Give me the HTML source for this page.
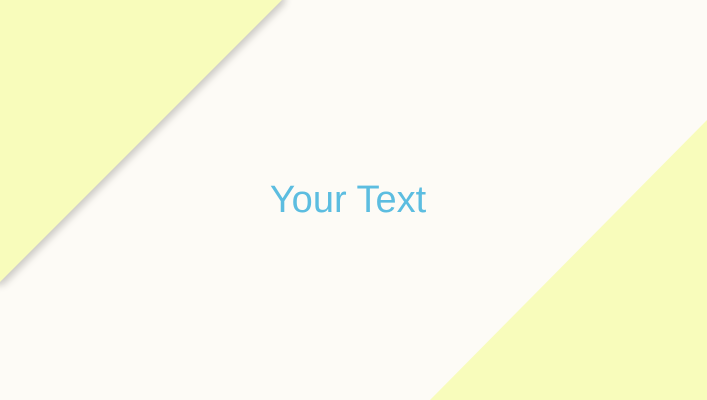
<!DOCTYPE html>
<html><head><style>
html,body{margin:0;padding:0;width:707px;height:400px;overflow:hidden;background:#f8fcbb}
</style></head><body>
<svg width="707" height="400" viewBox="0 0 707 400" style="position:absolute;left:0;top:0">
<defs><filter id="b" x="-20%" y="-20%" width="140%" height="140%"><feGaussianBlur stdDeviation="4"/></filter></defs>
<rect width="707" height="400" fill="#fdfbf6"/>
<polygon points="707,120 707,400 430,400" fill="#f8fcbb"/>
<polygon points="-10,-10 282,-10 282,0 0,282 -10,282" fill="#000" opacity="0.2" filter="url(#b)" transform="translate(3,3)"/>
<polygon points="0,0 282,0 0,282" fill="#f8fcbb"/>
<text x="348" y="212" text-anchor="middle" font-family="Liberation Sans, sans-serif" font-size="38" fill="#5cbde0">Your Text</text>
</svg>
</body></html>
